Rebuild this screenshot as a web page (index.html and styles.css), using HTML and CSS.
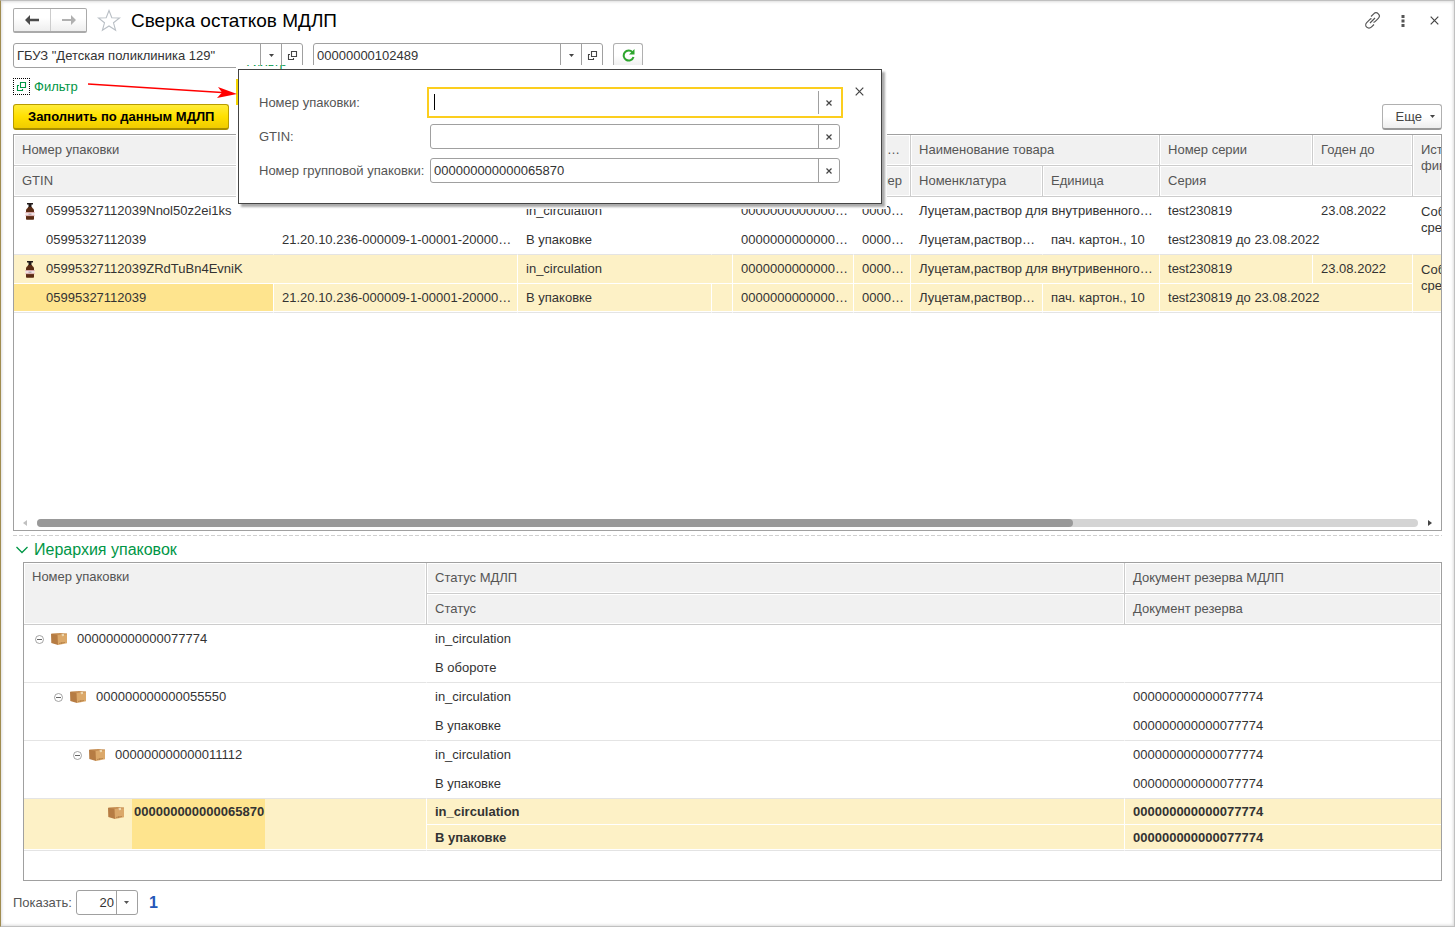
FILE: index.html
```html
<!DOCTYPE html>
<html lang="ru">
<head>
<meta charset="utf-8">
<title>Сверка остатков МДЛП</title>
<link rel="stylesheet" href="styles.css">
</head>
<body>
<svg class="defs" aria-hidden="true">
  <symbol id="open" viewBox="0 0 11 11"><path d="M4.500 1.500h5v5h-5zM3 4.500H1.500v5h5V8" fill="none" stroke="currentColor" stroke-width="1.100"/></symbol>
  <symbol id="caret" viewBox="0 0 5 3"><path d="M0 0h5L2.500 3z" fill="currentColor"/></symbol>
  <symbol id="cross" viewBox="0 0 9 9"><path d="M.7.7l7.600 7.600M8.300.7L.7 8.300" fill="none" stroke="currentColor" stroke-width="1.200"/></symbol>
  <symbol id="cross-small" viewBox="0 0 6 6"><path d="M.5.5l5 5M5.500.5l-5 5" fill="none" stroke="currentColor" stroke-width="1.200"/></symbol>
  <symbol id="minus" viewBox="0 0 9 9"><circle cx="4.500" cy="4.500" r="4" fill="#fff" stroke="#999" stroke-width=".9"/><path d="M2 4.500h5" stroke="#666"/></symbol>
  <symbol id="box" viewBox="0 0 16 12"><path d="M0 .8h7V12L.3 10z" fill="#b67c43"/><path d="M6.500 1.500L16 .8v9.400L7 12z" fill="#dba869"/><path d="M.3.800L9 0l7 .6v.6l-9 .9z" fill="#c68e52"/><path d="M10.500 1l2.500-.2v2.200l-2 .2z" fill="#ecd6ae"/><path d="M8.500 10.400l5-.9" stroke="#9a6634" stroke-dasharray="1 .5"/></symbol>
  <symbol id="bottle" viewBox="0 0 10 17"><path d="M2 0h6v1.500H6.500V4h-3V1.500H2z" fill="#211a1a"/><path d="M3 4h4c0 1.500 2 1.500 2 3.500V16q0 .8-.8.800H1.800Q1 16.800 1 16V7.500c0-2 2-2 2-3.500z" fill="#5b2c14"/><path d="M.5 9h9v4h-9z" fill="#eee0e2"/><path d="M.5 9.500h9M.5 12.700h9" stroke="#cf8f8f" stroke-width=".7"/><path d="M3.500 11.200h3" stroke="#8a8690" stroke-width=".8"/></symbol>
</svg>
<main class="window">
  <header class="titlebar">
    <div class="history">
      <button type="button" aria-label="Назад"><svg width="14" height="10" viewBox="0 0 14 10"><path d="M5 0v3.800h9v2.400H5V10L0 5z" fill="#4a4a4a"/></svg></button>
      <button type="button" aria-label="Вперед"><svg width="14" height="10" viewBox="0 0 14 10"><path d="M9 0v4H0v2h9v4l5-5z" fill="#b0b0b0"/></svg></button>
    </div>
    <button type="button" class="plain star" aria-label="В избранное"><svg width="24" height="23" viewBox="0 0 24 23"><path d="M12 1.500l2.800 7.200 7.700.3-6 4.800 2.100 7.500L12 17l-6.600 4.300 2.100-7.500-6-4.800 7.700-.3z" fill="#fff" stroke="#b9bfc5" stroke-width="1.100"/></svg></button>
    <h1>Сверка остатков МДЛП</h1>
    <div class="window-tools">
      <button type="button" class="plain" aria-label="Ссылка"><svg width="17" height="17" viewBox="0 0 17 17" fill="none" stroke="#555" stroke-width="1.200"><path d="M7 4.500l2.700-2.700a3.200 3.200 0 0 1 4.600 4.600l-3 3a3.200 3.200 0 0 1-1.800.9M10 12.500l-2.700 2.700a3.200 3.200 0 0 1-4.600-4.600l3-3a3.200 3.200 0 0 1 1.800-.9M6 11l5-5"/></svg></button>
      <button type="button" class="plain" aria-label="Меню"><svg width="4" height="12" viewBox="0 0 4 12" fill="#555"><path d="M.5 0h3v3h-3zM.5 4.500h3v3h-3zM.5 9h3v3h-3z"/></svg></button>
      <button type="button" class="plain" aria-label="Закрыть"><svg width="9" height="9"><use href="#cross"/></svg></button>
    </div>
  </header>

  <div class="selectors">
    <div class="field">
      <input type="text" aria-label="Организация" value="ГБУЗ &quot;Детская поликлиника 129&quot;">
      <button type="button" aria-label="Выбрать"><svg width="5" height="3"><use href="#caret"/></svg></button>
      <button type="button" aria-label="Открыть"><svg width="11" height="11"><use href="#open"/></svg></button>
    </div>
    <div class="field">
      <input type="text" aria-label="Место деятельности" value="00000000102489">
      <button type="button" aria-label="Выбрать"><svg width="5" height="3"><use href="#caret"/></svg></button>
      <button type="button" aria-label="Открыть"><svg width="11" height="11"><use href="#open"/></svg></button>
    </div>
    <button type="button" class="button refresh" aria-label="Обновить"><svg width="13" height="13" viewBox="0 0 13 13"><path d="M10.500 3.300A5 5 0 1 0 11.500 8" fill="none" stroke="#2da52d" stroke-width="2"/><path d="M12.500 0v5.500H7z" fill="#2da52d"/></svg></button>
  </div>

  <section class="filter">
    <a href="#filter" class="filter-link"><span class="filter-icon"><svg width="11" height="11"><use href="#open"/></svg></span>Фильтр</a>
    <svg class="pointer" width="150" height="20" viewBox="0 0 150 20"><path d="M0 4l134 8.500" stroke="#f00" stroke-width="1.700"/><path d="M149 14l-20 4 5-5.500-4-5.500z" fill="#f00"/></svg>
    <div class="popup-area">
      <span class="popup-echo">Фильтр</span>
      <span class="popup-edge"></span>
      <form class="popup" id="filter">
        <label for="pack">Номер упаковки:</label>
        <div class="field focused"><input type="text" id="pack"><span class="text-caret"></span><button type="button" aria-label="Очистить"><svg width="6" height="6"><use href="#cross-small"/></svg></button></div>
        <label for="gtin">GTIN:</label>
        <div class="field"><input type="text" id="gtin"><button type="button" aria-label="Очистить"><svg width="6" height="6"><use href="#cross-small"/></svg></button></div>
        <label for="group">Номер групповой упаковки:</label>
        <div class="field"><input type="text" id="group" value="000000000000065870"><button type="button" aria-label="Очистить"><svg width="6" height="6"><use href="#cross-small"/></svg></button></div>
        <button type="button" class="plain popup-close" aria-label="Закрыть"><svg width="9" height="9"><use href="#cross"/></svg></button>
      </form>
    </div>
  </section>

  <div class="commands">
    <button type="button" class="button primary">Заполнить по данным МДЛП</button>
    <button type="button" class="button more">Еще <svg width="5" height="3"><use href="#caret"/></svg></button>
  </div>

  <section class="grid stock">
    <table>
      <colgroup><col class="w-gtin"><col class="w-code"><col class="w-status"><col class="w-mark"><col class="w-doc"><col class="w-num"><col class="w-item"><col class="w-unit"><col class="w-series"><col class="w-date"><col></colgroup>
      <thead>
        <tr><th colspan="2">Номер упаковки</th><th colspan="2"></th><th></th><th class="short">…</th><th colspan="2">Наименование товара</th><th>Номер серии</th><th>Годен до</th><th rowspan="2" class="tall">Ист<br>фин</th></tr>
        <tr><th>GTIN</th><th></th><th></th><th></th><th></th><th>Номер</th><th>Номенклатура</th><th>Единица</th><th colspan="2">Серия</th></tr>
      </thead>
      <tbody>
        <tr><td colspan="2" class="lead"><svg class="bottle" width="10" height="17"><use href="#bottle"/></svg>05995327112039Nnol50z2ei1ks</td><td colspan="2">in_circulation</td><td>0000000000000…</td><td>0000…</td><td colspan="2">Луцетам,раствор для внутривенного…</td><td>test230819</td><td>23.08.2022</td><td rowspan="2" class="tall end">Соб<br>сре</td></tr>
        <tr class="end"><td class="lead">05995327112039</td><td>21.20.10.236-000009-1-00001-20000…</td><td>В упаковке</td><td></td><td>0000000000000…</td><td>0000…</td><td>Луцетам,раствор…</td><td>пач. картон., 10</td><td colspan="2">test230819 до 23.08.2022</td></tr>
      </tbody>
      <tbody class="selected">
        <tr><td colspan="2" class="lead"><svg class="bottle" width="10" height="17"><use href="#bottle"/></svg>05995327112039ZRdTuBn4EvniK</td><td colspan="2">in_circulation</td><td>0000000000000…</td><td>0000…</td><td colspan="2">Луцетам,раствор для внутривенного…</td><td>test230819</td><td>23.08.2022</td><td rowspan="2" class="tall end">Соб<br>сре</td></tr>
        <tr class="end"><td class="lead current">05995327112039</td><td>21.20.10.236-000009-1-00001-20000…</td><td>В упаковке</td><td></td><td>0000000000000…</td><td>0000…</td><td>Луцетам,раствор…</td><td>пач. картон., 10</td><td colspan="2">test230819 до 23.08.2022</td></tr>
      </tbody>
    </table>
    <div class="scroll">
      <svg width="4" height="6" viewBox="0 0 4 6"><path d="M4 0v6L0 3z" fill="#c0c0c0"/></svg>
      <div class="track"><div class="thumb"></div></div>
      <svg width="4" height="6" viewBox="0 0 4 6"><path d="M0 0v6l4-3z" fill="#444"/></svg>
    </div>
  </section>

  <div class="splitter"></div>

  <section class="hierarchy">
    <h2><svg width="12" height="8" viewBox="0 0 12 8"><path d="M.5 1L6 6.500 11.500 1" fill="none" stroke="#009646" stroke-width="1.300"/></svg>Иерархия упаковок</h2>
    <div class="grid tree">
      <table>
        <colgroup><col class="w-pack"><col class="w-state"><col></colgroup>
        <thead>
          <tr><th rowspan="2" class="tall">Номер упаковки</th><th>Статус МДЛП</th><th>Документ резерва МДЛП</th></tr>
          <tr><th>Статус</th><th>Документ резерва</th></tr>
        </thead>
        <tbody>
          <tr><td rowspan="2" class="node end"><div class="branch level-1"><svg width="9" height="9"><use href="#minus"/></svg><svg width="16" height="12"><use href="#box"/></svg><span>000000000000077774</span></div></td><td>in_circulation</td><td></td></tr>
          <tr class="end"><td>В обороте</td><td></td></tr>
        </tbody>
        <tbody>
          <tr><td rowspan="2" class="node end"><div class="branch level-2"><svg width="9" height="9"><use href="#minus"/></svg><svg width="16" height="12"><use href="#box"/></svg><span>000000000000055550</span></div></td><td>in_circulation</td><td>000000000000077774</td></tr>
          <tr class="end"><td>В упаковке</td><td>000000000000077774</td></tr>
        </tbody>
        <tbody>
          <tr><td rowspan="2" class="node end"><div class="branch level-3"><svg width="9" height="9"><use href="#minus"/></svg><svg width="16" height="12"><use href="#box"/></svg><span>000000000000011112</span></div></td><td>in_circulation</td><td>000000000000077774</td></tr>
          <tr class="end"><td>В упаковке</td><td>000000000000077774</td></tr>
        </tbody>
        <tbody class="selected strong">
          <tr><td rowspan="2" class="node end"><div class="branch level-4"><svg width="16" height="12"><use href="#box"/></svg><span class="current">000000000000065870</span></div></td><td>in_circulation</td><td>000000000000077774</td></tr>
          <tr class="end"><td>В упаковке</td><td>000000000000077774</td></tr>
        </tbody>
      </table>
    </div>
  </section>

  <footer class="pager">
    <label for="count">Показать:</label>
    <div class="count">
      <select id="count"><option>20</option><option>50</option></select>
      <svg width="5" height="3"><use href="#caret"/></svg>
    </div>
    <a href="#page-1">1</a>
  </footer>
</main>
</body>
</html>
```
FILE: styles.css
```css
* { box-sizing: border-box; }
body { margin: 0; background: #fff; color: #333; }
body, button, input, select { font: 13px/16px "Liberation Sans", Arial, sans-serif; }
button, input, select { margin: 0; padding: 0; border: 0; background: none; color: #333; border-radius: 0; outline: none; }
button { display: flex; align-items: center; justify-content: center; color: #444; }
svg { flex: none; display: block; }
.defs { position: absolute; width: 0; height: 0; }

.window {
  display: flex;
  flex-direction: column;
  min-height: 100vh;
  padding: 7px 12px 11px;
  border: 1px solid #c0c0c0;
  border-left-color: #a08c50;
  box-shadow: inset 0 0 3px 1px #ddd;
}

.titlebar { display: flex; align-items: center; height: 25px; }
.history { display: flex; height: 25px; border: 1px solid #aaa; border-bottom-width: 2px; border-radius: 2px; background: linear-gradient(#fff 40%, #eee); }
.history button { width: 35px; }
.history button:first-child { width: 37px; border-right: 1px solid #ccc; }
.star { margin: 0 10px; }
h1 { margin: 0; color: #000; font-size: 19px; line-height: 24px; font-weight: 400; }
.window-tools { display: flex; align-items: center; gap: 25px; margin-left: auto; padding-right: 3px; }
.window-tools .plain:first-child { margin-right: -5px; }

.selectors { display: flex; gap: 10px; height: 25px; margin-top: 10px; }
.field { position: relative; display: flex; height: 25px; border: 1px solid #a0a0a0; border-radius: 3px; background: #fff; }
.field input { flex: 1; min-width: 0; padding: 0 3px; }
.field button { width: 21px; border-left: 1px solid #a0a0a0; }
.selectors .field { width: 290px; }
.button { border: 1px solid #b0b0b0; border-bottom: 2px solid #999; border-radius: 3px; background: linear-gradient(#fff 50%, #eee); }
.refresh { width: 30px; height: 26px; }

.filter { position: relative; height: 36px; padding-top: 10px; }
.filter-link { display: inline-flex; align-items: center; gap: 4px; color: #009646; text-decoration: none; }
.filter-icon { display: flex; align-items: center; justify-content: center; width: 17px; height: 17px; border: 1px dotted #000; }
.pointer { position: absolute; z-index: 3; left: 75px; top: 12px; }
.popup-area { position: absolute; z-index: 2; left: 223px; top: -3px; width: 651px; padding: 4px 5px 5px 2px; background: #fff; }
.popup-echo { position: absolute; left: 7px; top: 0; display: flex; align-items: flex-end; height: 4px; overflow: hidden; color: #009646; line-height: 14px; }
.popup-edge { position: absolute; left: 0; top: 14px; width: 2px; height: 26px; background: #f5d500; }
.popup { position: relative; display: grid; grid-template-columns: 171px 410px; row-gap: 9px; align-items: center; padding: 20px; border: 1px solid #444; background: #fff; box-shadow: 3px 3px 2px #aaa; }
.popup label { color: #555; white-space: nowrap; }
.popup .focused { border-color: transparent; border-radius: 0; outline: 2px solid #fcce1e; outline-offset: 1px; }
.focused button { border-color: #a0a0a0; }
.text-caret { position: absolute; left: 3px; top: 3px; width: 1px; height: 16px; background: #000; }
.popup-close { position: absolute; right: 17px; top: 17px; }

.commands { display: flex; align-items: center; justify-content: space-between; }
.primary { height: 26px; padding: 0 14px; border: 1px solid #b89c00; border-bottom: 2px solid #a88e00; background: linear-gradient(#ffec3a, #ffe000 50%, #f0cc00); color: #000; font-weight: 700; }
.more { gap: 8px; height: 26px; padding: 0 6px 0 13px; }

.grid { border: 1px solid #a0a0a0; overflow: hidden; }
.stock { display: flex; flex-direction: column; flex: 1; margin-top: 4px; }
table { width: 100%; table-layout: fixed; border-collapse: separate; border-spacing: 0; }
th, td { height: 29px; padding: 0 0 0 8px; overflow: hidden; white-space: nowrap; text-align: left; border-right: 1px solid transparent; border-bottom: 1px solid transparent; }
th { height: 31px; color: #555; font-weight: 400; background: #f1f1f1; border-color: #ccc; box-shadow: inset 0 0 0 1px #fff; }
th:last-child, td.tall, .tree td:last-child { border-right: 0; }
th.short { padding-right: 10px; text-align: right; }
.stock tr:nth-child(2) th:last-child { border-right: 1px solid #ccc; }
.tall { padding-top: 7px; vertical-align: top; }
.tree .tall { padding-top: 6px; }
.tree thead .tall { border-right: 1px solid #ccc; }
.end td, td.end { border-bottom-color: #e4e4e4; }
.selected td { background: #fdf1c6; border-right-color: #fff; border-bottom-color: #fff; }
.selected .end td, .selected td.end { border-bottom-color: #e4e4e4; box-shadow: inset 0 -1px #fff; }
.selected .current { background: #fee48e; }
td.lead { position: relative; padding-left: 32px; }
.bottle { position: absolute; left: 11px; top: 6px; }
.w-gtin { width: 260px; } .w-code { width: 244px; } .w-status { width: 194px; } .w-mark { width: 21px; }
.w-doc { width: 121px; } .w-num { width: 57px; } .w-item { width: 132px; } .w-unit { width: 117px; }
.w-series { width: 153px; } .w-date { width: 100px; }
.w-pack { width: 403px; } .w-state { width: 698px; }

.scroll { display: flex; align-items: center; gap: 10px; margin-top: auto; padding: 3px 9px; }
.track { flex: 1; height: 8px; border-radius: 4px; background: #d4d4d4; }
.thumb { width: 75%; height: 8px; border-radius: 4px; background: #999; }
.splitter { height: 1px; margin-top: 4px; background: repeating-linear-gradient(90deg, #d0d0d0 0 4px, transparent 4px 6px); }

h2 { display: flex; align-items: center; gap: 6px; margin: 4px 0 2px; padding-left: 3px; color: #009646; font-size: 16px; line-height: 20px; font-weight: 400; }
.tree { margin-left: 10px; padding-bottom: 29px; }
.node { padding: 0; vertical-align: top; }
.branch { display: flex; align-items: center; height: 28px; }
.branch span { padding-left: 10px; }
.branch svg + svg { margin-left: 7px; }
.level-1 { padding-left: 11px; }
.level-2 { padding-left: 30px; }
.level-3 { padding-left: 49px; }
.level-4 { align-items: flex-start; height: 50px; padding-left: 84px; }
.level-4 svg { margin-top: 8px; }
.branch .current { height: 50px; margin-left: 8px; padding: 5px 1px 0 2px; }
.strong td { height: 26px; font-weight: 700; }

.pager { display: flex; align-items: center; height: 25px; margin-top: 9px; color: #555; }
.count { position: relative; display: flex; width: 62px; height: 25px; margin-left: 4px; border: 1px solid #a0a0a0; border-radius: 3px; }
.count select { appearance: none; width: 100%; padding-right: 23px; text-align-last: right; background: linear-gradient(#a0a0a0, #a0a0a0) 39px 0 / 1px 100% no-repeat; }
.count svg { position: absolute; right: 8px; top: 10px; pointer-events: none; }
.pager a { margin-left: 11px; color: #2456b8; font-size: 16px; font-weight: 700; text-decoration: none; }
```
